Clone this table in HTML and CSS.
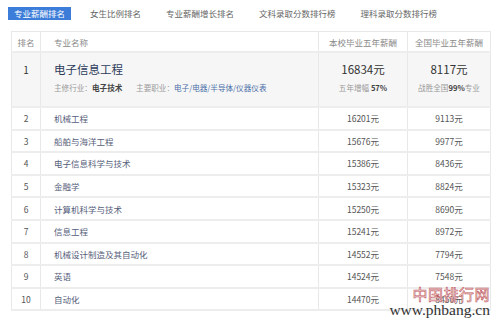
FILE: index.html
```html
<!DOCTYPE html>
<html lang="zh-CN">
<head>
    <meta charset="UTF-8">
    <title>专业薪酬排名</title>
    <link rel="stylesheet" href="styles.css">
</head>
<body>

    <div class="tabs">
        <span class="tab active">专业薪酬排名</span>
        <span class="tab">女生比例排名</span>
        <span class="tab">专业薪酬增长排名</span>
        <span class="tab">文科录取分数排行榜</span>
        <span class="tab">理科录取分数排行榜</span>
    </div>

    <table class="rank-table">
        <colgroup>
            <col class="c-rank">
            <col class="c-name">
            <col class="c-school">
            <col class="c-nation">
        </colgroup>
        <tr class="head">
            <th>排名</th>
            <th class="name">专业名称</th>
            <th>本校毕业五年薪酬</th>
            <th>全国毕业五年薪酬</th>
        </tr>
        <tr class="top">
            <td>1</td>
            <td class="name">
                <div class="title">电子信息工程</div>
                <div class="sub">
                    <span class="label">主修行业：</span><span class="strong">电子技术</span>
                    <span class="label gap">主要职业：</span><span class="link">电子/电器/半导体/仪器仪表</span>
                </div>
            </td>
            <td>
                <div class="title">16834元</div>
                <div class="sub"><span class="label">五年增幅 </span><span class="strong">57%</span></div>
            </td>
            <td>
                <div class="title">8117元</div>
                <div class="sub"><span class="label">战胜全国</span><span class="strong">99%</span><span class="label">专业</span></div>
            </td>
        </tr>
        <tr><td>2</td><td class="name">机械工程</td><td>16201元</td><td>9113元</td></tr>
        <tr><td>3</td><td class="name">船舶与海洋工程</td><td>15676元</td><td>9977元</td></tr>
        <tr><td>4</td><td class="name">电子信息科学与技术</td><td>15386元</td><td>8436元</td></tr>
        <tr><td>5</td><td class="name">金融学</td><td>15323元</td><td>8824元</td></tr>
        <tr><td>6</td><td class="name">计算机科学与技术</td><td>15250元</td><td>8690元</td></tr>
        <tr><td>7</td><td class="name">信息工程</td><td>15241元</td><td>8972元</td></tr>
        <tr><td>8</td><td class="name">机械设计制造及其自动化</td><td>14552元</td><td>7794元</td></tr>
        <tr><td>9</td><td class="name">英语</td><td>14524元</td><td>7548元</td></tr>
        <tr><td>10</td><td class="name">自动化</td><td>14470元</td><td>8450元</td></tr>
    </table>

    <div class="watermark">
        <div class="wm-cn">中国排行网</div>
        <div class="wm-url">www.phbang.cn</div>
    </div>

</body>
</html>
```

FILE: styles.css
```css
body {
    margin: 0;
    font-family: "Noto Sans CJK SC", "Noto Sans", sans-serif;
    background-color: #fff;
    color: #555;
}
.tabs {
    display: flex;
    gap: 13px;
    padding: 7px 0 0 8px;
    height: 13px;
}
.tab {
    font-size: 8.5px;
    line-height: 13px;
    padding: 0 6px;
    color: #666;
    white-space: nowrap;
}
.tab.active {
    background-color: #3b7dd8;
    color: #fff;
}
.rank-table {
    border-collapse: collapse;
    table-layout: fixed;
    margin: 11px 0 0 11px;
    width: 479px;
    font-size: 8.5px;
}
.c-rank { width: 29px; }
.c-name { width: 278px; }
.c-school { width: 89px; }
.c-nation { width: 83px; }
th, td {
    border: 1px solid #e8e8e8;
    border-width: 1px 1px 2px 1px;
    border-bottom-color: #ededed;
    text-align: center;
    padding: 0;
    white-space: nowrap;
    overflow: hidden;
}
th {
    font-weight: normal;
    color: #8a8a8a;
    height: 19px;
}
td {
    height: 20.6px;
    color: #555;
}
.name {
    text-align: left;
    padding-left: 13px;
}
td.name {
    color: #56607a;
}
/* 第一名：灰底、两行 */
.top td {
    background-color: #f6f6f6;
    height: 44px;
    vertical-align: top;
    padding-top: 9px;
    font-size: 10px;
    color: #333;
}
.top .title {
    font-size: 11.5px;
    line-height: 15px;
    color: #333;
}
.top td.name .title {
    color: #2d3b5a;
}
.top .sub {
    font-size: 7.6px;
    line-height: 10px;
    margin-top: 6px;
}
.label {
    color: #9a9a9a;
}
.gap {
    margin-left: 12px;
}
.strong {
    color: #444;
    font-weight: bold;
}
.link {
    color: #4b6fa8;
}
.watermark {
    position: absolute;
    right: 10px;
    top: 286px;
    text-align: right;
}
.wm-cn {
    font-size: 15px;
    line-height: 16px;
    letter-spacing: 0.5px;
    color: #fff;
    -webkit-text-stroke: 0.6px #c0555a;
}
.wm-url {
    font-family: "Liberation Serif", serif;
    font-size: 15.5px;
    line-height: 16px;
    color: #333;
}
```
